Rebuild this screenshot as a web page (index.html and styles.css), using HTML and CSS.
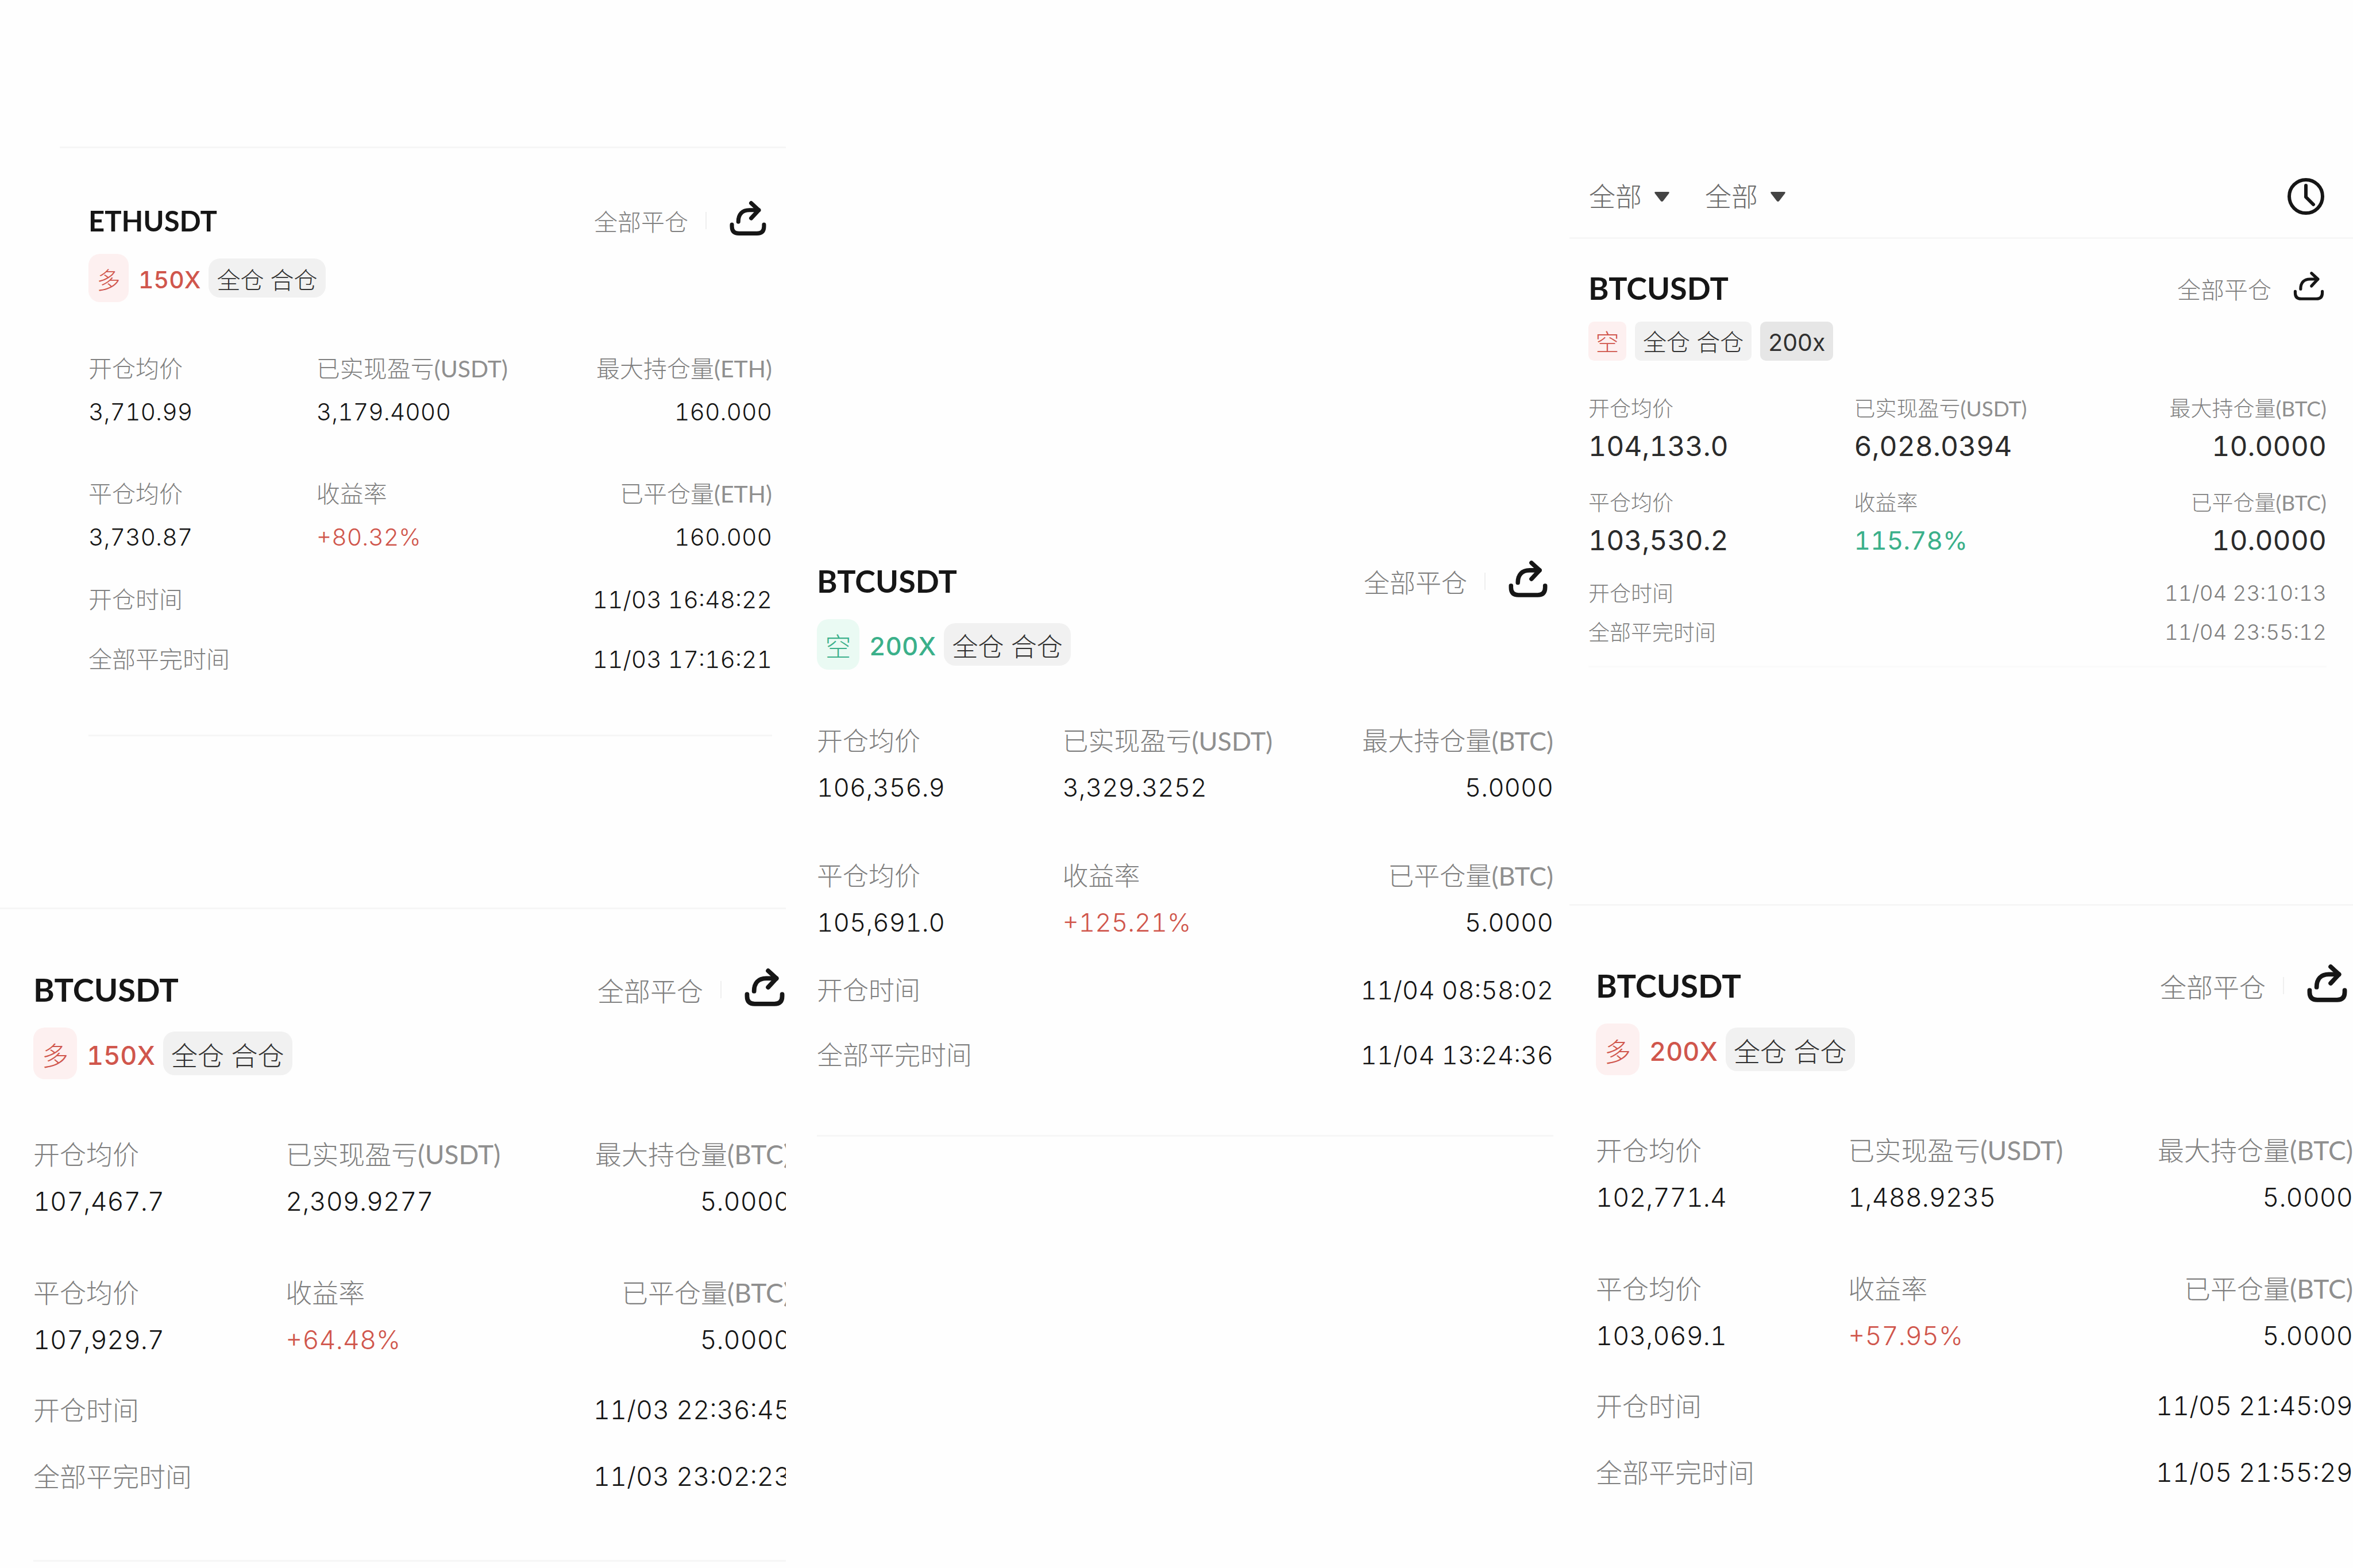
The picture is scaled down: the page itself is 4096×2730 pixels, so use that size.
FILE: index.html
```html
<!DOCTYPE html>
<html lang="zh-CN">
<head>
    <meta charset="UTF-8">
    <meta name="viewport" content="width=device-width, initial-scale=1.0">
    <title>历史仓位</title>
    <link rel="stylesheet" href="styles.css">
</head>
<body>
    <svg class="defs" aria-hidden="true">
        <symbol id="share" viewBox="0 0 63 60">
            <path d="M4 41v3q0 12 12 12h31q12 0 12-12v-3"/>
            <path d="M15 36c0-13 7-20 19-20h16"/>
            <path d="M37 4 50 16 37 30"/>
        </symbol>
    </svg>

    <main class="board">
        <div class="column first">
            <section class="panel inset">
                <article class="card small">
                    <header class="head">
                        <h2>ETHUSDT</h2>
                        <span class="status">全部平仓</span>
                        <span class="divider"></span>
                        <button class="share" aria-label="分享"><svg><use href="#share"/></svg></button>
                    </header>
                    <div class="tags">
                        <span class="side red">多</span>
                        <span class="lever red">150X</span>
                        <span class="tag">全仓 合仓</span>
                    </div>
                    <dl class="fields">
                        <div><dt>开仓均价</dt><dd>3,710.99</dd></div>
                        <div><dt>已实现盈亏<span class="unit">(USDT)</span></dt><dd>3,179.4000</dd></div>
                        <div><dt>最大持仓量<span class="unit">(ETH)</span></dt><dd>160.000</dd></div>
                        <div><dt>平仓均价</dt><dd>3,730.87</dd></div>
                        <div><dt>收益率</dt><dd class="rate red">+80.32%</dd></div>
                        <div><dt>已平仓量<span class="unit">(ETH)</span></dt><dd>160.000</dd></div>
                    </dl>
                    <dl class="times">
                        <div><dt>开仓时间</dt><dd>11/03 16:48:22</dd></div>
                        <div><dt>全部平完时间</dt><dd>11/03 17:16:21</dd></div>
                    </dl>
                </article>
            </section>

            <section class="panel bleed">
                <article class="card large">
                    <header class="head">
                        <h2>BTCUSDT</h2>
                        <span class="status">全部平仓</span>
                        <span class="divider"></span>
                        <button class="share" aria-label="分享"><svg><use href="#share"/></svg></button>
                    </header>
                    <div class="tags">
                        <span class="side red">多</span>
                        <span class="lever red">150X</span>
                        <span class="tag">全仓 合仓</span>
                    </div>
                    <dl class="fields">
                        <div><dt>开仓均价</dt><dd>107,467.7</dd></div>
                        <div><dt>已实现盈亏<span class="unit">(USDT)</span></dt><dd>2,309.9277</dd></div>
                        <div><dt>最大持仓量<span class="unit">(BTC)</span></dt><dd>5.0000</dd></div>
                        <div><dt>平仓均价</dt><dd>107,929.7</dd></div>
                        <div><dt>收益率</dt><dd class="rate red">+64.48%</dd></div>
                        <div><dt>已平仓量<span class="unit">(BTC)</span></dt><dd>5.0000</dd></div>
                    </dl>
                    <dl class="times">
                        <div><dt>开仓时间</dt><dd>11/03 22:36:45</dd></div>
                        <div><dt>全部平完时间</dt><dd>11/03 23:02:23</dd></div>
                    </dl>
                </article>
            </section>
        </div>

        <div class="column second">
            <article class="card medium">
                <header class="head">
                    <h2>BTCUSDT</h2>
                    <span class="status">全部平仓</span>
                    <span class="divider"></span>
                    <button class="share" aria-label="分享"><svg><use href="#share"/></svg></button>
                </header>
                <div class="tags">
                    <span class="side green">空</span>
                    <span class="lever green">200X</span>
                    <span class="tag">全仓 合仓</span>
                </div>
                <dl class="fields">
                    <div><dt>开仓均价</dt><dd>106,356.9</dd></div>
                    <div><dt>已实现盈亏<span class="unit">(USDT)</span></dt><dd>3,329.3252</dd></div>
                    <div><dt>最大持仓量<span class="unit">(BTC)</span></dt><dd>5.0000</dd></div>
                    <div><dt>平仓均价</dt><dd>105,691.0</dd></div>
                    <div><dt>收益率</dt><dd class="rate red">+125.21%</dd></div>
                    <div><dt>已平仓量<span class="unit">(BTC)</span></dt><dd>5.0000</dd></div>
                </dl>
                <dl class="times">
                    <div><dt>开仓时间</dt><dd>11/04 08:58:02</dd></div>
                    <div><dt>全部平完时间</dt><dd>11/04 13:24:36</dd></div>
                </dl>
            </article>
        </div>

        <div class="column third">
            <div class="toolbar">
                <label class="filter">
                    <select aria-label="合约"><option>全部</option></select>
                    <svg class="caret" viewBox="0 0 26 17"><path d="M2 0h22q3 0 1 3L15 16q-2 2-4 0L1 3q-2-3 1-3z"/></svg>
                </label>
                <label class="filter">
                    <select aria-label="类型"><option>全部</option></select>
                    <svg class="caret" viewBox="0 0 26 17"><path d="M2 0h22q3 0 1 3L15 16q-2 2-4 0L1 3q-2-3 1-3z"/></svg>
                </label>
                <button class="clock" aria-label="时间">
                    <svg viewBox="0 0 66 66"><circle cx="33" cy="33" r="29"/><path d="M33 14v20l13 13"/></svg>
                </button>
            </div>
            <section class="panel compact-panel">
                <article class="card compact">
                    <header class="head">
                        <h2>BTCUSDT</h2>
                        <span class="status">全部平仓</span>
                        <button class="share" aria-label="分享"><svg><use href="#share"/></svg></button>
                    </header>
                    <div class="tags">
                        <span class="side red">空</span>
                        <span class="tag">全仓 合仓</span>
                        <span class="tag dark">200x</span>
                    </div>
                    <dl class="fields">
                        <div><dt>开仓均价</dt><dd>104,133.0</dd></div>
                        <div><dt>已实现盈亏<span class="unit">(USDT)</span></dt><dd>6,028.0394</dd></div>
                        <div><dt>最大持仓量<span class="unit">(BTC)</span></dt><dd>10.0000</dd></div>
                        <div><dt>平仓均价</dt><dd>103,530.2</dd></div>
                        <div><dt>收益率</dt><dd class="rate green">115.78%</dd></div>
                        <div><dt>已平仓量<span class="unit">(BTC)</span></dt><dd>10.0000</dd></div>
                    </dl>
                    <dl class="times">
                        <div><dt>开仓时间</dt><dd>11/04 23:10:13</dd></div>
                        <div><dt>全部平完时间</dt><dd>11/04 23:55:12</dd></div>
                    </dl>
                </article>
            </section>

            <section class="panel flush">
                <article class="card large last">
                    <header class="head">
                        <h2>BTCUSDT</h2>
                        <span class="status">全部平仓</span>
                        <span class="divider"></span>
                        <button class="share" aria-label="分享"><svg><use href="#share"/></svg></button>
                    </header>
                    <div class="tags">
                        <span class="side red">多</span>
                        <span class="lever red">200X</span>
                        <span class="tag">全仓 合仓</span>
                    </div>
                    <dl class="fields">
                        <div><dt>开仓均价</dt><dd>102,771.4</dd></div>
                        <div><dt>已实现盈亏<span class="unit">(USDT)</span></dt><dd>1,488.9235</dd></div>
                        <div><dt>最大持仓量<span class="unit">(BTC)</span></dt><dd>5.0000</dd></div>
                        <div><dt>平仓均价</dt><dd>103,069.1</dd></div>
                        <div><dt>收益率</dt><dd class="rate red">+57.95%</dd></div>
                        <div><dt>已平仓量<span class="unit">(BTC)</span></dt><dd>5.0000</dd></div>
                    </dl>
                    <dl class="times">
                        <div><dt>开仓时间</dt><dd>11/05 21:45:09</dd></div>
                        <div><dt>全部平完时间</dt><dd>11/05 21:55:29</dd></div>
                    </dl>
                </article>
            </section>
        </div>
    </main>
</body>
</html>
```

FILE: styles.css
```css
*{
    box-sizing: border-box;
}
body{
    margin: 0;
    background: #fefefe;
    color: #161616;
    font-family: Lato, "Noto Sans CJK SC", sans-serif;
}
h2, dl, dd{
    margin: 0;
}
button, select{
    font: inherit;
    color: inherit;
    border: none;
    background: none;
    padding: 0;
    margin: 0;
    cursor: pointer;
}
svg{
    display: block;
}
.defs{
    display: none;
}

/* page columns */
.board{
    display: grid;
    grid-template-columns: 33.4% 33.3% 33.3%;
}
.column{
    min-width: 0;
    overflow: hidden;
}
.first{
    padding-top: 255px;
}
.second{
    padding: 978px 28px 0 54px;
}
.panel{
    border-top: 3px solid #f6f6f6;
}
.inset{
    margin-left: 104px;
    padding: 94px 24px 0 50px;
}
.bleed{
    margin-top: 298px;
    padding: 105px 0 0 58px;
}
.bleed .card{
    margin-right: -8px;
}
.compact-panel{
    padding: 58px 46px 0 33px;
}
.flush{
    margin-top: 412px;
    padding: 104px 0 0 46px;
}

/* filters over the list */
.toolbar{
    display: flex;
    align-items: center;
    gap: 62px;
    padding: 309px 49px 38px 34px;
}
.filter{
    display: flex;
    align-items: center;
    gap: 22px;
    font-size: 46px;
    line-height: 66px;
    color: #6c6c6c;
}
.filter select{
    appearance: none;
    font-weight: 300;
}
.caret{
    width: 26px;
    height: 17px;
    fill: #444;
}
.clock{
    margin-left: auto;
}
.clock svg{
    width: 66px;
    height: 66px;
    fill: none;
    stroke: #161616;
    stroke-width: 6;
    stroke-linecap: round;
    stroke-linejoin: round;
}

/* card sizes */
.small{
    --title: 49px;
    --text: 41px;
    --num: 41px;
    --head: 64px;
    --row: 60px;
    --inner: 15px;
    --group: 83px;
    --time-top: 49px;
    --time-gap: 44px;
    --tags-top: 26px;
    --tags-bottom: 86px;
    --side-w: 70px;
    --side-h: 84px;
    --tag-h: 68px;
    --icon: 64px;
    --end: 101px;
}
.medium{
    --title: 54px;
    --text: 45px;
    --num: 44px;
    --head: 68px;
    --row: 64px;
    --inner: 17px;
    --group: 90px;
    --time-top: 54px;
    --time-gap: 49px;
    --tags-top: 32px;
    --tags-bottom: 92px;
    --side-w: 74px;
    --side-h: 88px;
    --tag-h: 74px;
    --icon: 68px;
    --end: 107px;
}
.large{
    --title: 56px;
    --text: 46px;
    --num: 45px;
    --head: 70px;
    --row: 66px;
    --inner: 16px;
    --group: 93px;
    --time-top: 56px;
    --time-gap: 50px;
    --tags-top: 31px;
    --tags-bottom: 98px;
    --side-w: 76px;
    --side-h: 90px;
    --tag-h: 76px;
    --icon: 70px;
    --end: 112px;
}
.compact{
    --title: 54px;
    --text: 37px;
    --num: 48px;
    --head: 56px;
    --row: 50px;
    --inner: 16px;
    --group: 48px;
    --time-top: 42px;
    --time-gap: 18px;
    --tags-top: 30px;
    --tags-bottom: 58px;
    --side-w: 66px;
    --side-h: 68px;
    --tag-h: 68px;
    --icon: 54px;
    --end: 33px;
}

/* card */
.card{
    padding-bottom: var(--end);
    border-bottom: 3px solid #f6f6f6;
}
.last{
    border-bottom: none;
}
.head{
    display: flex;
    align-items: center;
    height: var(--head);
    padding-right: 10px;
}
.head h2{
    flex: 1;
    font-size: var(--title);
    font-weight: 700;
    line-height: var(--head);
}
.status{
    font-size: var(--text);
    font-weight: 300;
    color: #808080;
}
.divider{
    width: 2px;
    height: 30px;
    margin: 0 40px 0 30px;
    background: #efefef;
}
.share{
    margin-bottom: 8px;
}
.share svg{
    width: var(--icon);
    height: var(--icon);
    fill: none;
    stroke: #161616;
    stroke-width: 7;
    stroke-linecap: round;
    stroke-linejoin: round;
}
.tags{
    display: flex;
    align-items: center;
    height: var(--side-h);
    margin: var(--tags-top) 0 var(--tags-bottom);
    font-size: var(--text);
}
.side{
    width: var(--side-w);
    height: var(--side-h);
    line-height: var(--side-h);
    padding-top: 4px;
    border-radius: 20px;
    text-align: center;
    font-weight: 300;
}
.side.red{
    background: #fdf0f0;
}
.side.green{
    background: #eafaf3;
}
.lever{
    margin: 0 14px 0 17px;
    padding-top: 6px;
    font-family: Inter, sans-serif;
    font-size: var(--num);
    font-weight: 500;
    font-variant-numeric: tabular-nums;
}
.tag{
    height: var(--tag-h);
    line-height: var(--tag-h);
    padding: 4px 14px 0;
    border-radius: 20px;
    background: #f1f1f1;
    color: #303030;
    font-weight: 300;
}
.red{
    color: #d0564c;
}
.green{
    color: #3bb08a;
}
.fields{
    display: grid;
    grid-template-columns: 1fr 1fr 1fr;
    row-gap: var(--group);
    line-height: var(--row);
    white-space: nowrap;
}
.fields > div{
    display: flex;
    flex-direction: column;
    gap: var(--inner);
}
.fields > div:nth-child(3n){
    align-items: flex-end;
}
dt{
    height: var(--row);
    font-size: var(--text);
    font-weight: 300;
    color: #808080;
}
.unit{
    font-weight: 400;
    color: #8f8f8f;
}
dd{
    height: var(--row);
    font-family: Inter, sans-serif;
    font-size: var(--num);
    font-weight: 300;
    font-variant-numeric: tabular-nums;
}
.times{
    display: flex;
    flex-direction: column;
    gap: var(--time-gap);
    margin-top: var(--time-top);
    line-height: var(--row);
}
.times > div{
    display: flex;
    justify-content: space-between;
}

/* compact card */
.compact{
    border-bottom-color: #fafafa;
}
.compact .share{
    margin-left: 38px;
}
.compact .head{
    padding-right: 4px;
}
.compact .status{
    font-size: 41px;
}
.compact .share svg{
    stroke-width: 6;
}
.compact .tags{
    gap: 15px;
    font-size: 41px;
}
.compact .side, .compact .tag{
    padding-top: 2px;
    border-radius: 10px;
}
.compact .tag.dark{
    background: #e6e6e6;
    font-family: Inter, sans-serif;
    font-weight: 400;
}
.compact .fields{
    grid-template-columns: 36% 32% 32%;
}
.compact dd{
    font-weight: 400;
    color: #2b2b2b;
}
.compact .rate{
    font-size: 44px;
    color: #3bb08a;
}
.compact .times dd{
    font-size: var(--text);
    font-weight: 300;
    color: #808080;
}
```
